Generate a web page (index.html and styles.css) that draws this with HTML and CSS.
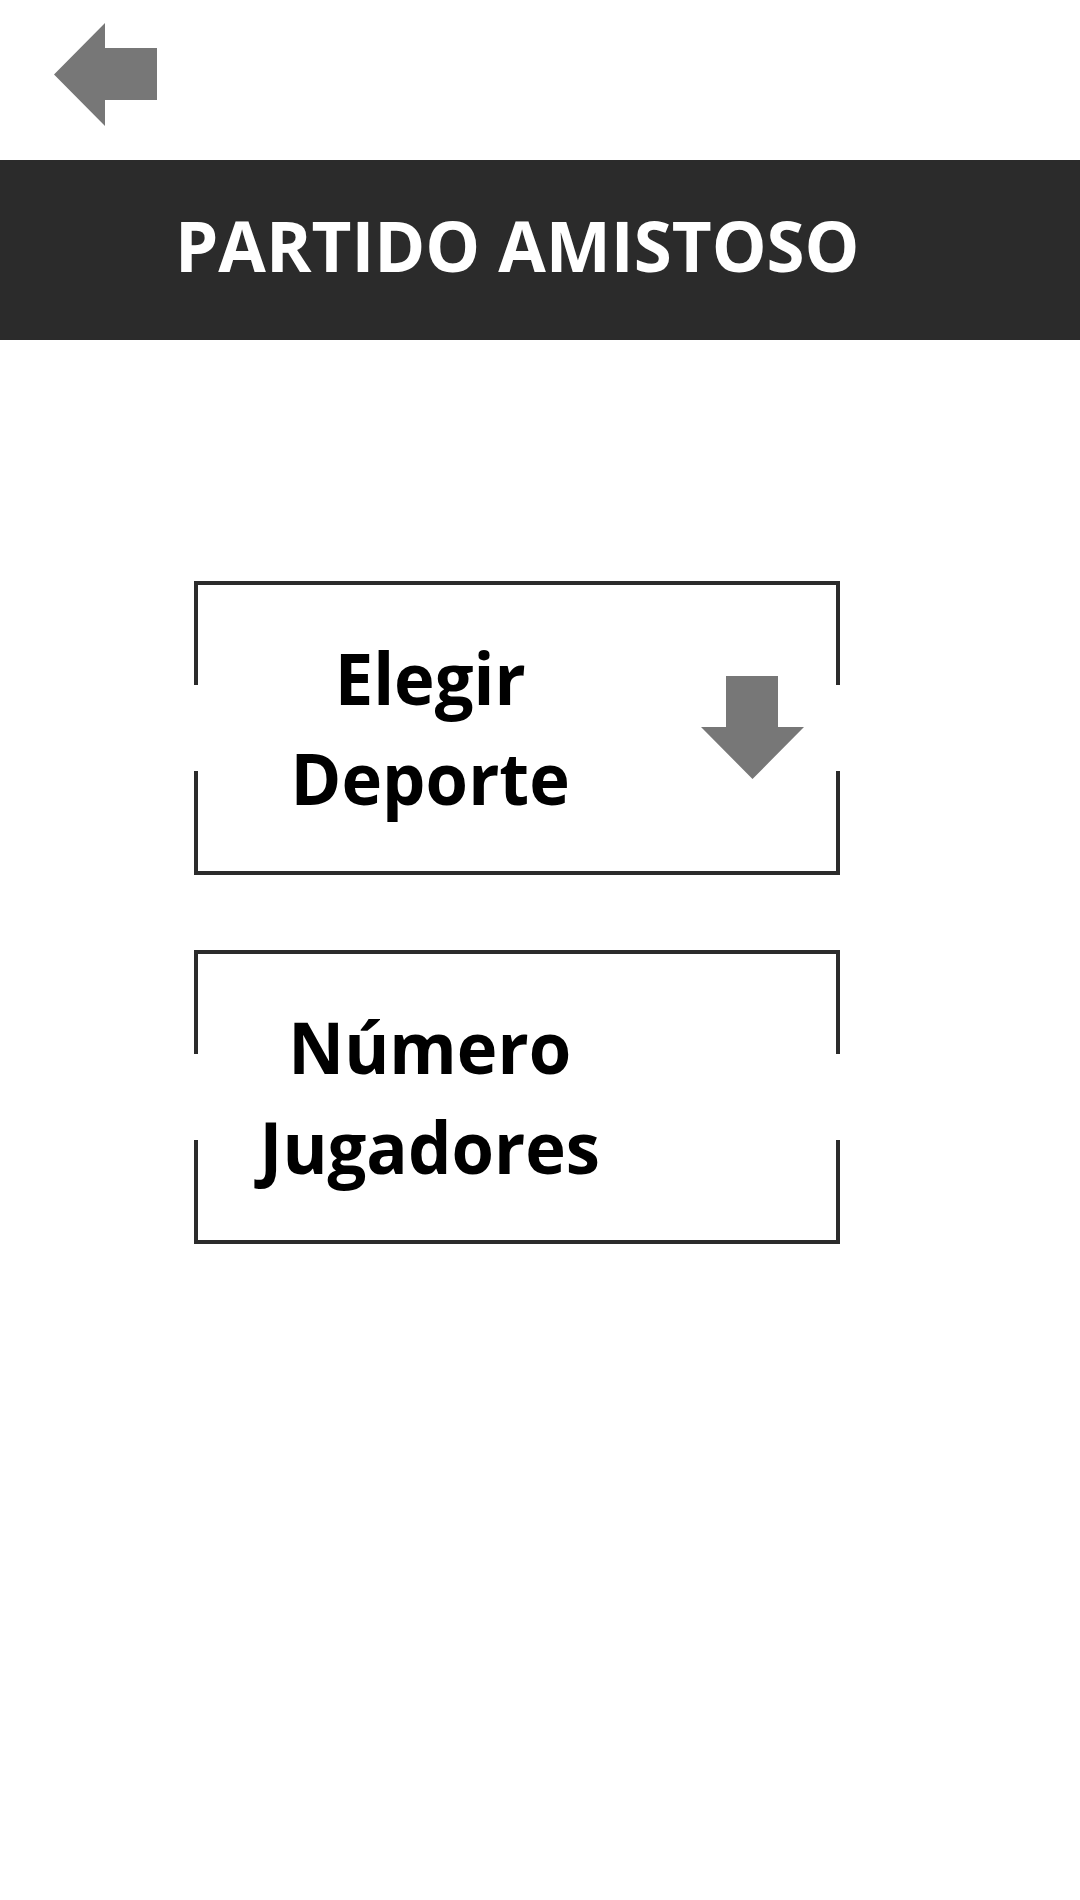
FILE: index.html
```html
<!DOCTYPE html>
<html lang="es">
<head>
<meta charset="utf-8">
<title>Partido Amistoso</title>
<link rel="stylesheet" href="styles.css">
</head>
<body>
  <div class="topbar">
    <svg class="back" width="104" height="104" viewBox="0 0 104 104" aria-label="Volver">
      <polygon points="0,51.5 51,0 51,25 103,25 103,77 51,77 51,103" fill="#777777"/>
    </svg>
  </div>
  <header class="header">
    <h1 class="title">PARTIDO AMISTOSO</h1>
  </header>
  <main class="content">
    <div class="field">
      <div class="label"><span>Elegir<br>Deporte</span></div>
      <svg class="down" width="104" height="104" viewBox="0 0 104 104">
        <polygon points="25,0 77,0 77,51 103,51 51.5,103 0,51 25,51" fill="#777777"/>
      </svg>
    </div>
    <div class="field">
      <div class="label"><span>Número<br>Jugadores</span></div>
    </div>
  </main>
</body>
</html>
```

FILE: styles.css
```css
html, body {
  margin: 0;
  padding: 0;
  background: #ffffff;
}

body {
  font-family: "Open Sans", "Noto Sans", "Liberation Sans", sans-serif;
  width: 1080px;
  min-height: 1900px;
}

.topbar {
  height: 160px;
  box-sizing: border-box;
  padding: 23px 0 0 54px;
}

.back {
  display: block;
}

.header {
  background: #2b2b2b;
  height: 180px;
  box-sizing: border-box;
  padding: 38px 0 0 175px;
}

.title {
  margin: 0;
  color: #ffffff;
  font-weight: 700;
  font-size: 69px;
  line-height: 94px;
  white-space: nowrap;
}

.content {
  padding: 241px 0 0 194px;
  display: flex;
  flex-direction: column;
  gap: 75px;
}

.field {
  width: 646px;
  height: 294px;
  box-sizing: border-box;
  border-top: 4px solid #2b2b2b;
  border-bottom: 4px solid #2b2b2b;
  background-image:
    linear-gradient(#2b2b2b, #2b2b2b),
    linear-gradient(#2b2b2b, #2b2b2b),
    linear-gradient(#2b2b2b, #2b2b2b),
    linear-gradient(#2b2b2b, #2b2b2b);
  background-origin: border-box;
  background-clip: border-box;
  background-repeat: no-repeat;
  background-size: 4px 104px;
  background-position: left top, right top, left bottom, right bottom;
  display: flex;
  align-items: center;
}

.label {
  width: 472px;
  text-align: center;
  font-weight: 700;
  font-size: 71px;
  line-height: 100px;
  color: #000000;
}

.label span {
  display: inline-block;
  transform: scaleX(0.968);
}

.down {
  display: block;
  margin-left: 35px;
}
```
